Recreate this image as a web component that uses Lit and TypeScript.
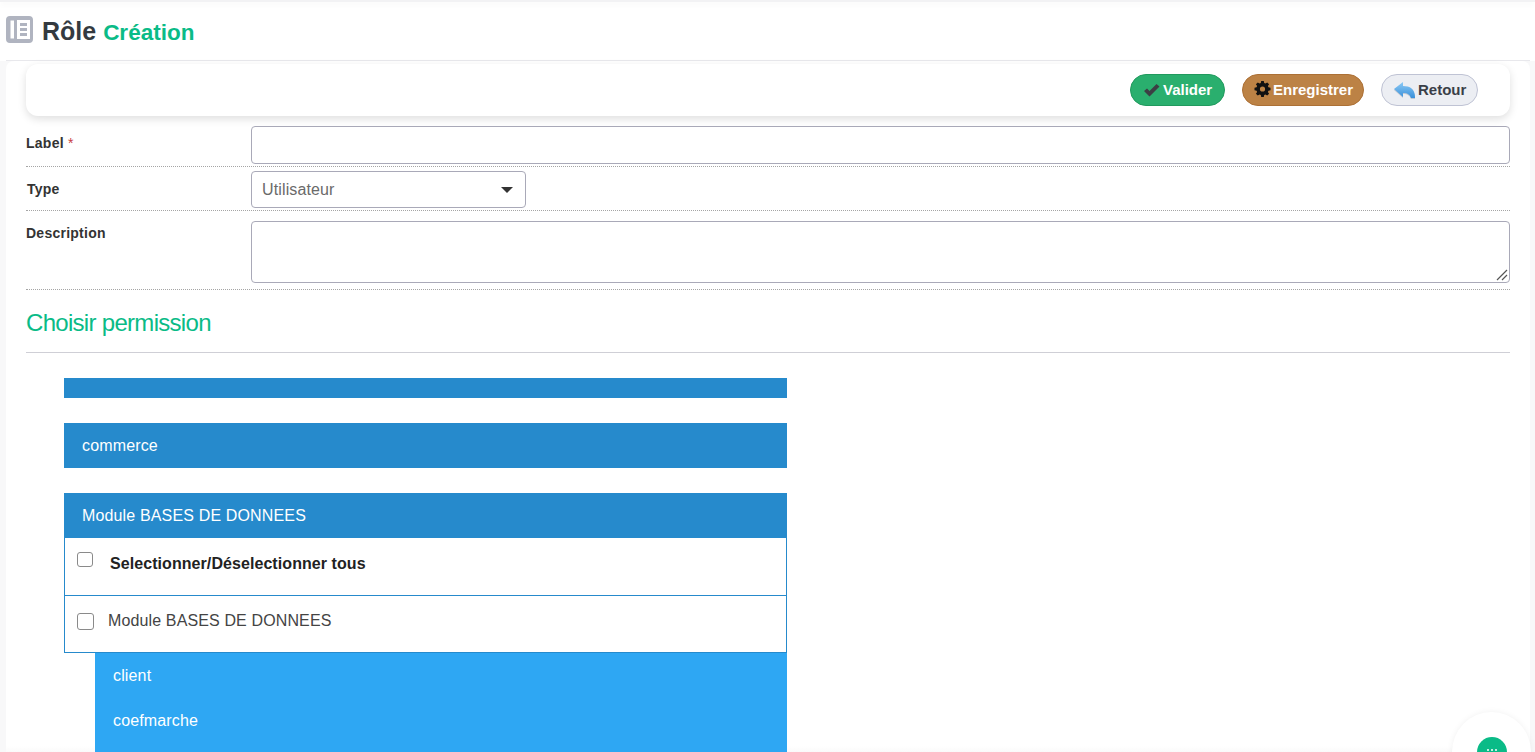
import { LitElement, html, css } from "lit";
import { customElement } from "lit/decorators.js";

@customElement("app-root")
export class AppRoot extends LitElement {
  static styles = css`
    :host { display: block; height: 752px; overflow: hidden; position: relative; background: #fff; font-family: "Liberation Sans", Arial, sans-serif; color: #212529; }
    * { box-sizing: border-box; }
    .topbar { height: 2px; background: #f2f2f4; box-shadow: 0 2px 6px rgba(0,0,0,.06); }
    .head { height: 59px; margin: 0 5px 0 6px; border-bottom: 1px solid #e8e8ec; display: flex; align-items: flex-start; padding-top: 13.500px; }
    .head svg { width: 27px; height: 27px; margin-right: 9px; flex: none; }
    .title { font-size: 25px; font-weight: 700; color: #343a40; line-height: 30px; padding-top: 0.500px; }
    .title small { font-size: 22.500px; color: #0abb87; }
    .page { background: #f8f8f9; padding: 0 5px 0 6px; height: 691px; }
    .card { background: linear-gradient(#fff calc(100% - 6px), #fafafa); padding: 3px 20px 0 20px; border-radius: 8px 8px 0 0; height: 691px; }
    .toolbar { height: 52px; border-radius: 12px; background: #fff; box-shadow: 0 3px 8px rgba(0,0,0,.13); display: flex; align-items: center; justify-content: flex-end; gap: 17px; padding: 0 32px 0 0; }
    .btn { height: 32px; border-radius: 16px; display: flex; align-items: center; font-size: 15px; font-weight: 700; padding: 0 12px 2px; border: 1px solid; white-space: nowrap; }
    .btn svg { flex: none; margin-top: 2px; }
    .ok { width: 95px; background: #2aaf6e; border-color: #219a5e; color: #fff; }
    .ok svg { margin-right: 2px; }
    .save { width: 122px; background: #bc8245; border-color: #ac7035; color: #fff; padding-left: 11px; }
    .save svg { margin: 0 2px 0 0; }
    .back { width: 97px; background: #eceef3; border-color: #bfc3d4; color: #3a3f48; }
    .row { display: grid; grid-template-columns: 225px 1fr; border-bottom: 1px dotted #a5a5a5; }
    .lab { font-size: 14px; font-weight: 700; color: #333; letter-spacing: .25px; }
    .lab i { color: #c9403f; font-style: normal; font-weight: 400; }
    .r1 { height: 51px; padding-top: 10px; }
    .r1 .lab { padding-top: 9px; }
    .r2 { height: 44px; padding-top: 4px; }
    .r2 .lab { padding: 10px 0 0 1px; }
    .r3 { height: 79px; padding-top: 10px; }
    .r3 .lab { padding-top: 4px; }
    .field { border: 1px solid #a9a9b8; border-radius: 4px; background: #fff; }
    .input { height: 38px; }
    .select { width: 275px; height: 37px; display: flex; align-items: center; justify-content: space-between; padding: 0 12px 0 10px; font-size: 16px; letter-spacing: .13px; color: #6a6a6a; }
    .select b { width: 0; height: 0; border-left: 6px solid transparent; border-right: 6px solid transparent; border-top: 6px solid #333; }
    .textarea { height: 62px; position: relative; }
    .grip { position: absolute; right: 1px; bottom: 1px; width: 12px; height: 12px; }
    h2 { margin: 0; padding: 18px 0 13px; font-size: 24px; letter-spacing: -.7px; line-height: 30px; font-weight: 400; color: #0abb87; height: 63px; border-bottom: 1px solid #cfcfd6; }
    .perm { width: 723px; margin: 25px 0 0 38px; }
    .bar { background: #268acc; color: #fff; font-size: 16px; letter-spacing: .15px; height: 45px; line-height: 45px; padding-left: 18px; }
    .bar.empty { height: 20px; margin-bottom: 25px; }
    .bar.mod { margin-top: 25px; }
    .box { border: 1px solid #268acc; border-top: 0; border-bottom: 0; background: #fff; }
    .chk { height: 57px; display: flex; font-size: 16px; border-bottom: 1px solid #268acc; }
    .cb { width: 16px; height: 15px; border: 1.500px solid #8a8a8a; border-radius: 3px; flex: none; background: #fff; }
    .chk.all { font-weight: 700; color: #222; padding: 14px 0 0 12px; height: 58px; letter-spacing: .07px; }
    .chk.all span { margin-left: 17px; line-height: 24px; }
    .chk.one { color: #444; height: 57px; padding: 17px 0 0 12px; letter-spacing: .13px; }
    .chk.one .cb { width: 17px; height: 17px; }
    .chk.one span { margin-left: 14px; line-height: 16px; }
    .sub { margin-left: 31px; background: #2ea7f3; color: #fff; font-size: 16px; letter-spacing: .15px; height: 110px; padding: 0 0 0 18px; }
    .sub div { height: 45px; line-height: 45px; }
    .chat { position: absolute; left: 1452px; top: 712px; width: 79px; height: 80px; border-radius: 50%; background: #fff; box-shadow: 0 0 6px rgba(0,0,0,.06); display: flex; align-items: center; justify-content: center; }
    .dot { width: 30px; height: 30px; border-radius: 50%; background: #0abb87; display: flex; align-items: center; justify-content: center; gap: 2px; padding-bottom: 4px; }
    .dot i { width: 2px; height: 2px; background: #fff; border-radius: 50%; }
  `;
  render() {
    return html`
      <div class="topbar"></div>
      <div class="head">
        <svg viewBox="0 0 27 27"><path fill="#b0b4c0" fill-rule="evenodd" d="M4 0h19a4 4 0 0 1 4 4v19a4 4 0 0 1-4 4H4a4 4 0 0 1-4-4V4a4 4 0 0 1 4-4zM4.500 4.500v18h3.500v-18zM11 4v19h13V4zM14 7h7v3h-7zM14 12h7v3h-7zM14 17h7v3h-7z"/></svg>
        <div class="title">Rôle <small>Création</small></div>
      </div>
      <div class="page"><div class="card">
        <div class="toolbar">
          <div class="btn ok"><svg width="18" height="14" viewBox="0 0 18 14"><path fill="#3c3f44" d="M1 8 4 5.500l2.500 2.500L13.500 1 16.500 3.500 6.500 13.500z"/></svg>Valider</div>
          <div class="btn save"><svg width="17" height="16" viewBox="0 0 16 16"><path fill="#111" fill-rule="evenodd" d="M6.700 0h2.600l.4 2.100 1.200.5 1.800-1.200 1.900 1.900-1.200 1.800.5 1.200 2.100.4v2.600l-2.100.4-.5 1.200 1.200 1.800-1.900 1.900-1.800-1.200-1.200.5-.4 2.100H6.700l-.4-2.100-1.200-.5-1.800 1.200-1.900-1.900 1.200-1.800-.5-1.200L0 9.300V6.700l2.100-.4.500-1.200-1.200-1.800 1.900-1.900 1.800 1.200 1.200-.5zM8 5.400a2.600 2.600 0 1 0 0 5.200 2.600 2.600 0 0 0 0-5.200z"/></svg>Enregistrer</div>
          <div class="btn back"><svg width="24" height="18" viewBox="0 0 24 18">
            <defs><linearGradient id="bk" x1="0" y1="0" x2="0" y2="1"><stop offset="0" stop-color="#8ccaf5"/><stop offset="1" stop-color="#3a90da"/></linearGradient></defs>
            <path fill="#9aa3b2" d="M9 2v4c7 0 12 3 12 11v1h-4c-1-3-3-5-8-5v4L0 9z" opacity=".5"/>
            <path fill="url(#bk)" d="M9 1v4c7 0 12 3 12 11v1h-4c-1-3-3-5-8-5v4L0 8z"/>
          </svg>Retour</div>
        </div>
        <div class="row r1"><div class="lab">Label <i>*</i></div><div class="field input"></div></div>
        <div class="row r2"><div class="lab">Type</div><div class="field select">Utilisateur<b></b></div></div>
        <div class="row r3"><div class="lab">Description</div><div class="field textarea"><svg class="grip" viewBox="0 0 12 12"><path stroke="#555" stroke-width="1.200" d="M1 11 11 1M6 11l5-5"/></svg></div></div>
        <h2>Choisir permission</h2>
        <div class="perm">
          <div class="bar empty"></div>
          <div class="bar">commerce</div>
          <div class="bar mod">Module BASES DE DONNEES</div>
          <div class="box">
            <div class="chk all"><div class="cb"></div><span>Selectionner/Déselectionner tous</span></div>
            <div class="chk one"><div class="cb"></div><span>Module BASES DE DONNEES</span></div>
          </div>
          <div class="sub"><div>client</div><div>coefmarche</div></div>
        </div>
      </div></div>
      <div class="chat"><div class="dot"><i></i><i></i><i></i></div></div>
    `;
  }
}
